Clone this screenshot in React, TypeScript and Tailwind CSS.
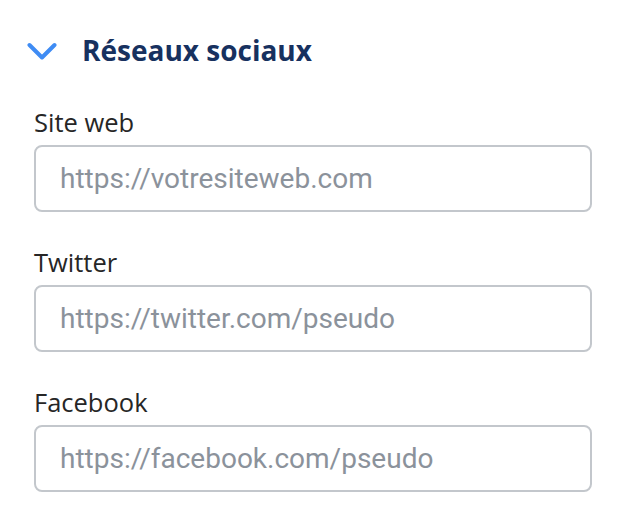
const fields = [
  { label: "Site web", placeholder: "https://votresiteweb.com" },
  { label: "Twitter", placeholder: "https://twitter.com/pseudo" },
  { label: "Facebook", placeholder: "https://facebook.com/pseudo" },
];

export default function App() {
  return (
    <div className="h-[524px] w-[642px] bg-white pl-[34px] pr-[50px] pt-[28px] font-['Open_Sans',sans-serif]">
      <div className="flex items-center">
        <svg width="30" height="19" viewBox="0 0 30 19" className="-ml-[7px] mt-[2px]" fill="none">
          <polyline
            points="2.5,3 15,15.5 27.5,3"
            stroke="#3f8cf4"
            strokeWidth="4"
            strokeLinecap="round"
            strokeLinejoin="round"
          />
        </svg>
        <h2 className="ml-[25px] text-[28px] font-bold leading-[44px] text-[#17315f]">Réseaux sociaux</h2>
      </div>
      <div className="mt-[32px] flex flex-col gap-[32px]">
        {fields.map((field) => (
          <label key={field.label} className="flex flex-col">
            <span className="text-[25.5px] leading-[36px] text-[#262626]">{field.label}</span>
            <input
              type="text"
              placeholder={field.placeholder}
              className="mt-[5px] h-[67px] w-full rounded-[8px] border-2 border-[#c3c7cc] px-[24px] font-['Roboto',sans-serif] text-[28px] text-[#222] outline-none placeholder:text-[#8b929b]"
            />
          </label>
        ))}
      </div>
    </div>
  );
}
